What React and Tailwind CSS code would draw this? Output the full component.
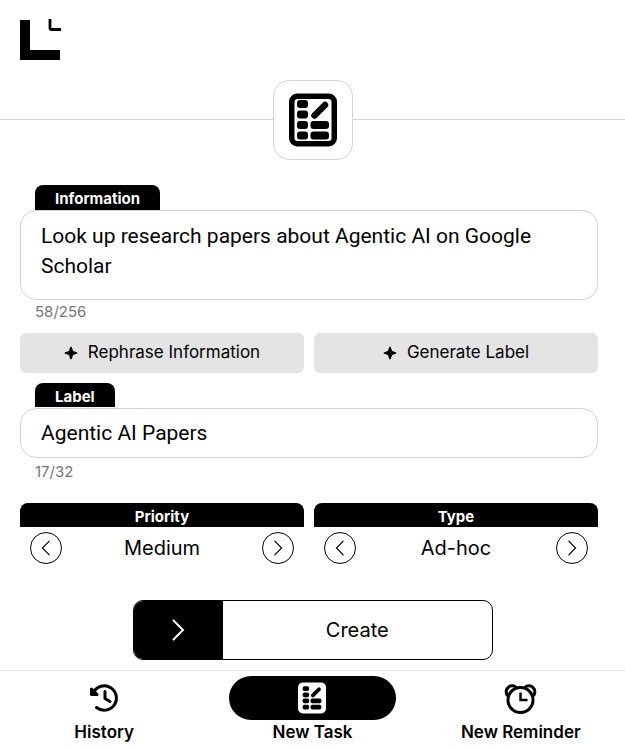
import React, { useState } from "react";

function Logo() {
  return (
    <svg width="42" height="42" viewBox="0 0 42 42" aria-label="Logo" role="img">
      <path d="M0 1h10v30h30v10H0z" fill="#000" />
      <path d="M30 0v9.5q0 1 1 1h10" fill="none" stroke="#000" strokeWidth="2.8" />
    </svg>
  );
}

function TaskIcon({ className, paper, ink, frame }) {
  return (
    <svg className={className} viewBox="0 0 48 54" aria-hidden="true">
      <rect x="2.75" y="3.25" width="42.5" height="47.5" rx="5.5" fill={paper} stroke={frame} strokeWidth="5.5" />
      <g fill={ink}>
        <rect x="8" y="7" width="11" height="8" rx="3" />
        <rect x="8" y="17.5" width="11" height="8" rx="3" />
        <rect x="8" y="28" width="11" height="8" rx="3" />
        <rect x="8" y="38.5" width="11" height="8" rx="3" />
        <rect x="21.5" y="28" width="18.5" height="8" rx="3" />
        <rect x="21.5" y="38.5" width="18.5" height="8" rx="3" />
      </g>
      <path d="M25.500 22.500 36 12" stroke={ink} strokeWidth="6.500" strokeLinecap="round" />
    </svg>
  );
}

function Sparkle() {
  return (
    <svg width="14" height="14" viewBox="0 0 14 14" aria-hidden="true">
      <path d="M7 .5C7.900.5 8.300 3 9.100 4.900 11 5.700 13.500 6.100 13.500 7S11 8.300 9.100 9.100C8.300 11 7.900 13.500 7 13.500S5.700 11 4.900 9.100C3 8.300.5 7.900.5 7S3 5.700 4.900 4.900C5.700 3 6.100.5 7 .5z" fill="#000" />
    </svg>
  );
}

function HistoryIcon() {
  return (
    <svg width="30" height="30" viewBox="0 0 30 30" fill="none" stroke="#000" strokeWidth="3" strokeLinecap="round" strokeLinejoin="round" aria-hidden="true">
      <path d="M4.500 9.200A12.200 12.200 0 1 1 7.500 24.500" />
      <path d="M2.500 6v5.500h5.500z" fill="#000" />
      <path d="M16 8.500v7l5 3" />
    </svg>
  );
}

function AlarmIcon() {
  return (
    <svg width="36" height="32" viewBox="0.500 0 36 32" fill="none" stroke="#000" strokeWidth="3" aria-hidden="true">
      <circle cx="18" cy="18" r="12.500" />
      <path d="M5.400 14A5.900 5.900 0 1 1 13.800 5.600" />
      <path d="M30.600 14A5.900 5.900 0 1 0 22.200 5.600" />
      <path d="M18 10.500v7.500h7" strokeWidth="2.400" />
    </svg>
  );
}

function Chevron({ left, className, stroke }) {
  return (
    <svg className={className} viewBox="0 0 14 22" fill="none" stroke="currentColor" strokeWidth={stroke} strokeLinecap="round" aria-hidden="true">
      <path d={left ? "M11.500 1.500 2 11l9.500 9.500" : "M2.500 1.500 12 11l-9.500 9.500"} />
    </svg>
  );
}

function AssistButton({ children }) {
  return (
    <button type="button" className="flex h-10 flex-1 items-center justify-center gap-2.5 rounded-md bg-[#e4e4e4] pb-px text-[17px]">
      <Sparkle />
      {children}
    </button>
  );
}

function Picker({ title, options, initial }) {
  const [index, setIndex] = useState(initial);
  const step = (n) => setIndex((index + n + options.length) % options.length);
  const round = "flex size-8 items-center justify-center rounded-full border border-black";
  return (
    <div role="group" aria-label={title} className="flex-1">
      <div className="h-6 rounded-t-lg bg-black pt-1 text-center text-[15px] leading-5 font-bold text-white">{title}</div>
      <div className="flex items-center justify-between px-2.5 pt-[5px]">
        <button type="button" aria-label="Previous" className={round} onClick={() => step(-1)}>
          <Chevron left stroke="1.600" className="h-4 w-2.5" />
        </button>
        <span className="text-[20px] leading-8">{options[index]}</span>
        <button type="button" aria-label="Next" className={round} onClick={() => step(1)}>
          <Chevron stroke="1.600" className="h-4 w-2.5" />
        </button>
      </div>
    </div>
  );
}

function NavItem({ active, label, children }) {
  return (
    <a href="#" className="flex flex-1 flex-col items-center text-[17px] leading-6 font-semibold" aria-current={active ? "page" : undefined}>
      <span className={active ? "flex h-11 w-4/5 items-center justify-center rounded-full bg-black" : "flex h-11 w-4/5 items-center justify-center"}>
        {children}
      </span>
      {label}
    </a>
  );
}

export default function App() {
  const [info, setInfo] = useState("Look up research papers about Agentic AI on Google Scholar");
  const [label, setLabel] = useState("Agentic AI Papers");
  return (
    <div className="flex min-h-screen flex-col bg-white font-[Inter,sans-serif] text-black">
      <header>
        <div className="flex h-20 items-center px-5">
          <Logo />
        </div>
        <div className="flex items-center">
          <div className="mb-px h-px flex-1 bg-[#d3d3d3]" />
          <div className="flex size-20 items-center justify-center rounded-[16px] border border-[#d3d3d3]">
            <TaskIcon className="h-[54px] w-12" paper="#fff" ink="#000" frame="#000" />
          </div>
          <div className="mb-px h-px flex-1 bg-[#d3d3d3]" />
        </div>
      </header>

      <form className="flex grow flex-col pt-[25px]" onSubmit={(e) => e.preventDefault()}>
        <div className="pr-[27px] pl-5">
          <label htmlFor="info" className="ml-[15px] block h-[25px] w-fit rounded-t-lg bg-black px-5 pt-1 text-[15px] leading-5 font-bold text-white">
            Information
          </label>
          <textarea
            id="info"
            maxLength={256}
            value={info}
            onChange={(e) => setInfo(e.target.value)}
            className="block h-[90px] w-full resize-none rounded-[16px] border border-[#d3d3d3] px-5 py-2.5 font-[Roboto,sans-serif] text-[21px] leading-[30px] outline-none"
          />
          <p className="ml-[15px] h-[33px] text-[15px] leading-6 text-[#767676]">{info.length}/256</p>

          <div className="flex gap-2.5">
            <AssistButton>Rephrase Information</AssistButton>
            <AssistButton>Generate Label</AssistButton>
          </div>

          <label htmlFor="label" className="mt-2.5 mb-px ml-[15px] block h-6 w-fit rounded-t-lg bg-black px-5 pt-1 text-[15px] leading-5 font-bold text-white">
            Label
          </label>
          <input
            id="label"
            type="text"
            maxLength={32}
            value={label}
            onChange={(e) => setLabel(e.target.value)}
            className="block h-[50px] w-full rounded-[16px] border border-[#d3d3d3] px-5 font-[Roboto,sans-serif] text-[21px] outline-none"
          />
          <p className="ml-[15px] pt-0.5 text-[15px] leading-6 text-[#767676]">{label.length}/32</p>

          <div className="mt-[19px] flex gap-2.5">
            <Picker title="Priority" options={["Low", "Medium", "High"]} initial={1} />
            <Picker title="Type" options={["Ad-hoc", "Recurring"]} initial={0} />
          </div>
        </div>

        <div className="mt-auto flex justify-center py-2.5">
          <button type="submit" className="flex h-[60px] w-[360px] max-w-full overflow-hidden rounded-[10px] border border-black text-[20px]">
            <span className="flex h-full w-1/4 items-center justify-center bg-black text-white">
              <Chevron stroke="2" className="h-[22px] w-3.5" />
            </span>
            <span className="flex h-full flex-1 items-center justify-center">Create</span>
          </button>
        </div>
      </form>

      <nav className="flex h-20 border-t border-[#e4e4e4] pt-[5px]">
        <NavItem label="History">
          <HistoryIcon />
        </NavItem>
        <NavItem active label="New Task">
          <TaskIcon className="h-8 w-7" paper="#fff" ink="#000" frame="#fff" />
        </NavItem>
        <NavItem label="New Reminder">
          <AlarmIcon />
        </NavItem>
      </nav>
    </div>
  );
}
